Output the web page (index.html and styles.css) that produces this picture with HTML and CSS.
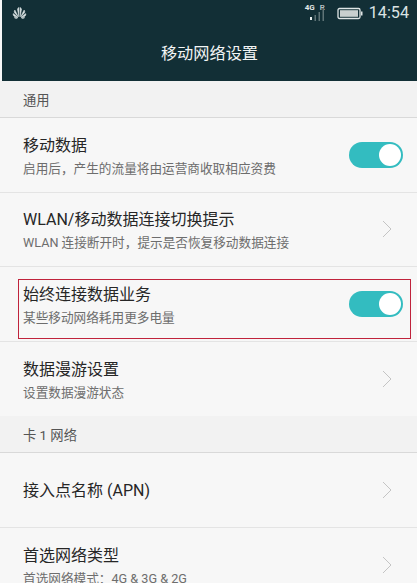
FILE: index.html
```html
<!DOCTYPE html>
<html lang="zh-CN">
<head>
    <meta charset="UTF-8">
    <meta name="viewport" content="width=device-width, initial-scale=1.0">
    <title>移动网络设置</title>
    <link rel="stylesheet" href="styles.css">
</head>
<body>
    <header class="app-header">
        <div class="status-bar">
            <svg class="huawei-logo" width="15" height="12" viewBox="0 0 14 12">
                <g fill="#dfe6e6" stroke="#dfe6e6" stroke-width=".5">
                    <path d="M6.4 9.6 5 2.6C5 1.6 5.8 .6 6.4 .4Z"/>
                    <path d="M7.6 9.6 9 2.6C9 1.6 8.2 .6 7.6 .4Z"/>
                    <path d="M5.8 9.8 2.4 3C1.6 4 1.6 5 2.2 6Z"/>
                    <path d="M8.2 9.8 11.6 3C12.4 4 12.4 5 11.8 6Z"/>
                    <path d="M5.2 10 .7 6.6C.5 7.6 .8 8.8 1.8 9.4Z"/>
                    <path d="M8.8 10 13.3 6.6C13.5 7.6 13.2 8.8 12.2 9.4Z"/>
                    <path d="M5.4 10.6H1.8C2.4 11.4 3.6 11.6 4.4 11.2Z"/>
                    <path d="M8.6 10.6H12.2C11.6 11.4 10.4 11.6 9.6 11.2Z"/>
                </g>
            </svg>
            <div class="status-right">
                <div class="signal">
                    <span class="signal-label">4G</span>
                    <span class="signal-label roam">R</span>
                    <svg width="20" height="15" viewBox="0 0 20 15">
                        <rect x="1" y="10" width="2" height="3" fill="#e8eeee"/>
                        <rect x="5.5" y="8" width="1.5" height="6" fill="#5f7477"/>
                        <rect x="9.5" y="5" width="1.5" height="9" fill="#5f7477"/>
                        <rect x="13.5" y="1" width="1.5" height="13" fill="#5f7477"/>
                    </svg>
                </div>
                <svg class="battery" width="26" height="13" viewBox="0 0 26 13">
                    <rect x="1" y="1.5" width="22" height="10" rx="1.5" fill="none" stroke="#dfe6e6" stroke-width="1.3"/>
                    <rect x="3" y="3.2" width="18" height="6.6" fill="#c8d0cf"/>
                    <rect x="24" y="4.5" width="1.5" height="4" fill="#dfe6e6"/>
                </svg>
                <span class="clock">14:54</span>
            </div>
        </div>
        <h1 class="page-title">移动网络设置</h1>
    </header>

    <div class="section-label">通用</div>
    <div class="row">
        <div class="row-text">
            <div class="row-title">移动数据</div>
            <div class="row-sub">启用后，产生的流量将由运营商收取相应资费</div>
        </div>
        <div class="switch"><span class="knob"></span></div>
    </div>
    <div class="row">
        <div class="row-text">
            <div class="row-title">WLAN/移动数据连接切换提示</div>
            <div class="row-sub">WLAN 连接断开时，提示是否恢复移动数据连接</div>
        </div>
        <svg class="chevron" width="10" height="18" viewBox="0 0 10 18"><path d="M1 1l8 8-8 8" fill="none" stroke="#c4c4c4" stroke-width="1"/></svg>
    </div>
    <div class="row highlighted">
        <div class="row-text">
            <div class="row-title">始终连接数据业务</div>
            <div class="row-sub">某些移动网络耗用更多电量</div>
        </div>
        <div class="switch"><span class="knob"></span></div>
        <div class="red-box"></div>
    </div>
    <div class="row no-line">
        <div class="row-text">
            <div class="row-title">数据漫游设置</div>
            <div class="row-sub">设置数据漫游状态</div>
        </div>
        <svg class="chevron" width="10" height="18" viewBox="0 0 10 18"><path d="M1 1l8 8-8 8" fill="none" stroke="#c4c4c4" stroke-width="1"/></svg>
    </div>

    <div class="section-label">卡 1 网络</div>
    <div class="row">
        <div class="row-text">
            <div class="row-title">接入点名称 (APN)</div>
        </div>
        <svg class="chevron" width="10" height="18" viewBox="0 0 10 18"><path d="M1 1l8 8-8 8" fill="none" stroke="#c4c4c4" stroke-width="1"/></svg>
    </div>
    <div class="row no-line">
        <div class="row-text">
            <div class="row-title">首选网络类型</div>
            <div class="row-sub">首选网络模式：4G &amp; 3G &amp; 2G</div>
        </div>
        <svg class="chevron" width="10" height="18" viewBox="0 0 10 18"><path d="M1 1l8 8-8 8" fill="none" stroke="#c4c4c4" stroke-width="1"/></svg>
    </div>
</body>
</html>
```

FILE: styles.css
```css
html, body {
    height: 583px;
    overflow: hidden;
}
body {
    margin: 0;
    padding: 0;
    background-color: #f7f7f7;
    font-family: Roboto, "Noto Sans CJK SC", sans-serif;
    color: #2c2c2c;
}
.app-header {
    height: 81px;
    margin-left: 2px;
    background-color: #122f36;
    color: #f2f5f5;
}
.status-bar {
    height: 26px;
    display: flex;
    justify-content: space-between;
    align-items: center;
    padding: 0 8px 0 10px;
}
.status-right {
    display: flex;
    align-items: center;
}
.signal {
    position: relative;
    width: 24px;
    height: 19px;
    margin-right: 8px;
}
.signal svg {
    position: absolute;
    left: 4px;
    top: 3px;
}
.signal-label {
    position: absolute;
    left: 0;
    top: -1px;
    font-size: 8px;
    line-height: 9px;
    font-weight: 700;
    color: #e2e8e8;
}
.signal-label.roam {
    left: 15px;
    font-weight: 400;
}
.battery {
    margin-right: 6px;
}
.clock {
    font-size: 16.2px;
    line-height: 26px;
    color: #dbe3e3;
}
.page-title {
    margin: 0;
    font-size: 16.2px;
    font-weight: 400;
    line-height: 56px;
    text-align: center;
}
.section-label {
    box-sizing: border-box;
    height: 37px;
    padding-left: 23px;
    background-color: #f2f2f2;
    border-bottom: 1px solid #d9d9d9;
    font-size: 13.3px;
    line-height: 39px;
    color: #555;
}
.row {
    position: relative;
    box-sizing: border-box;
    height: 74.5px;
    display: flex;
    align-items: center;
    justify-content: space-between;
    padding: 0 14px 0 23px;
    border-bottom: 1px solid #e4e4e4;
}
.row.no-line {
    border-bottom: none;
}
.row-text {
    padding-top: 2px;
}
.row-title {
    font-size: 16px;
    line-height: 24px;
    color: #262626;
}
.row-sub {
    font-size: 12.65px;
    line-height: 19px;
    margin-top: 1px;
    color: #6d6d6d;
}
.switch {
    width: 54px;
    height: 26px;
    box-sizing: border-box;
    padding: 2px;
    border-radius: 13px;
    background-color: #33bcc0;
    display: flex;
    justify-content: flex-end;
}
.knob {
    width: 22px;
    height: 22px;
    border-radius: 50%;
    background-color: #fff;
}
.chevron {
    margin-right: 11px;
}
.red-box {
    position: absolute;
    left: 18px;
    top: 12px;
    width: 393px;
    height: 60px;
    box-sizing: border-box;
    border: 1px solid #c0233c;
}
```
